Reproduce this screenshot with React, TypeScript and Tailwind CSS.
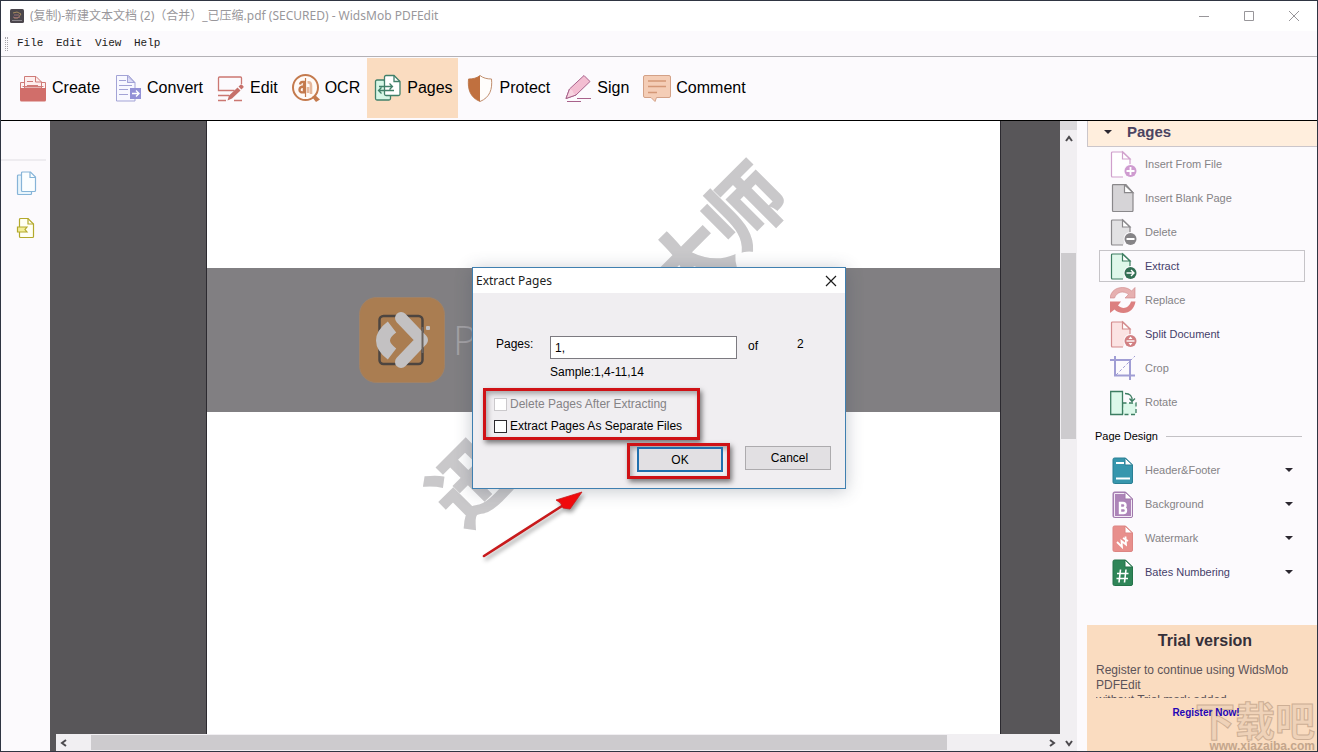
import { ReactNode, useState } from 'react';

const toolbarItems: { label: string; icon: ReactNode; active?: boolean }[] = [
  { label: 'Create', icon: <CreateIcon /> },
  { label: 'Convert', icon: <ConvertIcon /> },
  { label: 'Edit', icon: <EditIcon /> },
  { label: 'OCR', icon: <OcrIcon /> },
  { label: 'Pages', icon: <PagesIcon />, active: true },
  { label: 'Protect', icon: <ProtectIcon /> },
  { label: 'Sign', icon: <SignIcon /> },
  { label: 'Comment', icon: <CommentIcon /> },
];

const pageActions: { label: string; icon: ReactNode; enabled?: boolean; selected?: boolean }[] = [
  { label: 'Insert From File', icon: <PageIcon stroke="#d0a0cc" fill="#fff" badge="#cf9bd0" sign="plus" /> },
  { label: 'Insert Blank Page', icon: <BlankPageIcon /> },
  { label: 'Delete', icon: <PageIcon stroke="#8a888b" fill="#e2e1e3" badge="#868487" sign="minus" /> },
  {
    label: 'Extract',
    icon: <PageIcon stroke="#3c7d60" fill="#dff7ea" badge="#336f54" sign="arrow" />,
    enabled: true,
    selected: true,
  },
  { label: 'Replace', icon: <ReplaceIcon /> },
  {
    label: 'Split Document',
    icon: <PageIcon stroke="#d38a8c" fill="#fbe3e3" badge="#d17f82" sign="split" />,
    enabled: true,
  },
  { label: 'Crop', icon: <CropIcon /> },
  { label: 'Rotate', icon: <RotateIcon /> },
];

const designActions: { label: string; icon: ReactNode; enabled?: boolean }[] = [
  {
    label: 'Header&Footer',
    icon: (
      <DesignIcon fill="#3796ad" stroke="#2a7f94">
        <path d="M6 7h8M6 22.500h14" stroke="#fff" strokeWidth="2" />
      </DesignIcon>
    ),
  },
  {
    label: 'Background',
    icon: (
      <DesignIcon fill="#ad84b8" stroke="#a079ac">
        <path d="M4.500 3.500h11l6 6v17h-17z" fill="none" stroke="#f3eaf5" />
        <path
          d="M10 13v10h3.500a2.500 2.500 0 0 0 0-5H10h3a2.500 2.500 0 0 0 0-5z"
          fill="none"
          stroke="#fff"
          strokeWidth="2.400"
        />
      </DesignIcon>
    ),
  },
  {
    label: 'Watermark',
    icon: (
      <DesignIcon fill="#e88f8c" stroke="#dd8583">
        <path d="M7 18l5 5-.5-6 4.500 3.500-.5-8M13 14l5 3" fill="none" stroke="#fff" strokeWidth="1.800" />
      </DesignIcon>
    ),
  },
  {
    label: 'Bates Numbering',
    icon: (
      <DesignIcon fill="#2f8558" stroke="#25734a">
        <path d="M10.500 11.500l-1.500 13M16 11.500l-1.500 13M7 15.500h11.500M6.500 20.500h11.500" stroke="#fff" strokeWidth="1.600" />
      </DesignIcon>
    ),
    enabled: true,
  },
];

function CreateIcon() {
  return (
    <svg className="size-7 shrink-0" viewBox="0 0 28 28" fill="none" stroke="#cf7b78">
      <path d="M1.500 15V8.500h4M22 8.500h4.500V15" fill="#fdf1f0" />
      <path d="M5.500 14V2.500H17l5.500 5.500v6z" fill="#fdeeee" />
      <path d="M16.500 2.500v5.500h6M8 7.500h6M8 11.500h11" />
      <path d="M1 14h26v12a1.500 1.500 0 0 1-1.500 1.500h-23A1.500 1.500 0 0 1 1 26z" fill="#d16e6a" stroke="none" />
      <path d="M3.500 12.500h21" />
    </svg>
  );
}

function ConvertIcon() {
  return (
    <svg className="size-7 shrink-0" viewBox="0 0 28 28" fill="none" stroke="#a3a3d6">
      <path d="M2.500 1.500h12l6.500 7v18.500H2.500z" fill="#f8f8ff" />
      <path d="M13.500 1.500v7h7.500M5 6.500h7M5 11.500h13M5 15.500h9M5 20.500h9" />
      <path d="M13.500 2l7 6.500h-7z" fill="#dcdcf6" />
      <path d="M16 14h11v11H16z" fill="#9391d6" stroke="none" />
      <path d="M18 19.500h7M22 16.500l3 3-3 3" stroke="#fff" strokeWidth="1.400" />
    </svg>
  );
}

function EditIcon() {
  return (
    <svg className="size-7 shrink-0" viewBox="0 0 28 28" fill="none" stroke="#cb7772" strokeWidth="1.300">
      <path d="M24.500 10V4a1 1 0 0 0-1-1h-21a1 1 0 0 0-1 1v12.500h16" />
      <path d="M1 21.500h11M1 26.500h8M17 26.500h8" />
      <path d="M12 21.500l8.500-8 3 3-8.500 8-4.500 2z" fill="#c6706a" stroke="none" />
      <path d="M21.500 12.500l2-1.800a1 1 0 0 1 1.400 0l1.500 1.500a1 1 0 0 1 0 1.400l-2 2z" fill="#c6706a" stroke="none" />
    </svg>
  );
}

function OcrIcon() {
  return (
    <svg className="size-7 shrink-0" viewBox="0 0 28 28" fill="none" stroke="#c47a4e">
      <circle cx="13.500" cy="13.500" r="12.500" strokeWidth="2" fill="#fffaf7" />
      <path d="M20 23l3-2 5 4.500-4 2.500z" fill="#c47a4e" stroke="none" />
      <path d="M15.500 8.500c3-.5 3.500 1 3.500 3.500v8M16 13v6" stroke="#e5b79c" strokeWidth="2.600" />
      <path d="M8 10.500C8.500 8 10 7.500 12 8v11.500M12 12.500c-3 0-4.500 1-4.500 3.500s3 3 4.500 1.500" strokeWidth="2.400" />
      <path d="M13.500 4v19" strokeWidth="1.200" />
    </svg>
  );
}

function PagesIcon() {
  return (
    <svg className="size-7 shrink-0" viewBox="0 0 28 28" fill="none" stroke="#41806a" strokeWidth="1.300">
      <path d="M10 6H3a1.500 1.500 0 0 0-1.500 1.500v17A1.500 1.500 0 0 0 3 26h12a1.500 1.500 0 0 0 1.500-1.500V21z" fill="#d6f6e6" />
      <path d="M10.500 3A1.500 1.500 0 0 1 12 1.500h8l6 6V20a1.500 1.500 0 0 1-1.500 1.500H12A1.500 1.500 0 0 1 10.500 20z" fill="#fff" />
      <path d="M20 1.500v6h6M5 12.500h13M15.500 9.500l3 3-3 3M20 16.500H5M7.500 13.500l-3 3 3 3" />
    </svg>
  );
}

function ProtectIcon() {
  return (
    <svg className="size-7 shrink-0" viewBox="0 0 28 28">
      <path
        d="M13 1.500c3 2.500 7 3.500 11.500 3.500 1 10-1.500 18.500-11.500 22.500C3 23.500.5 15 1.500 5 6 5 10 4 13 1.500z"
        fill="#fffdfb"
        stroke="#c08d6d"
      />
      <path d="M13 1.500C10 4 6 5 1.500 5 .5 15 3 23.500 13 27.500z" fill="#c0703f" />
    </svg>
  );
}

function SignIcon() {
  return (
    <svg className="size-7 shrink-0" viewBox="0 0 28 28" fill="none" stroke="#a8628b" strokeLinejoin="round">
      <path d="M2 24.500L5.500 15 20 1.500l6 6L12 21z" fill="#f3bed2" />
      <path d="M2 24.500L5.500 15l3 1.500 1 2.500 2.500 2z" fill="#f7d3df" stroke="none" />
      <path d="M2 24.500L5.500 15M2 24.500L12 21M13 24.500h14M3 27.500h14" />
    </svg>
  );
}

function CommentIcon() {
  return (
    <svg className="size-7 shrink-0" viewBox="0 0 28 28" fill="none" stroke="#d3a187">
      <path d="M2 1.500h24a1.500 1.500 0 0 1 1.500 1.500v19a1.500 1.500 0 0 1-1.500 1.500H13.500L12 27.500l-4-4H2A1.500 1.500 0 0 1 .5 22V3A1.500 1.500 0 0 1 2 1.500z" fill="#f4cdb6" />
      <path d="M5 7h18M5 12.500h18M5 18.500h9" stroke="#d49877" strokeWidth="1.500" />
    </svg>
  );
}

function PageIcon({ stroke, fill, badge, sign }: { stroke: string; fill: string; badge: string; sign: string }) {
  return (
    <svg className="size-7 shrink-0" viewBox="0 0 28 28" fill="none">
      <path
        d="M13 27H2.500a1 1 0 0 1-1-1V3a1 1 0 0 1 1-1H13l7 7v7"
        fill={fill}
        stroke={stroke}
        strokeWidth="1.200"
      />
      <path d="M12.500 2v7H20z" fill="#fff" stroke={stroke} strokeWidth="1.200" />
      <circle cx="20.500" cy="21" r="7" fill="#fcfafd" />
      <circle cx="20.500" cy="21" r="6" fill={badge} />
      {sign === 'plus' && <path d="M16.500 21h8M20.500 17v8" stroke="#fff" strokeWidth="1.800" />}
      {sign === 'minus' && <path d="M16.500 21h8" stroke="#fff" strokeWidth="2" />}
      {sign === 'arrow' && <path d="M16.500 21h7.500M21 18l3 3-3 3" stroke="#fff" strokeWidth="1.400" />}
      {sign === 'split' && (
        <>
          <path d="M16.500 21h8" stroke="#fff" strokeWidth="1.400" />
          <path d="M18.500 19l2-2.500 2 2.500zM18.500 23l2 2.500 2-2.500z" fill="#fff" />
        </>
      )}
    </svg>
  );
}

function BlankPageIcon() {
  return (
    <svg className="size-7 shrink-0" viewBox="0 0 28 28" stroke="#8a888b" strokeWidth="1.200">
      <path d="M3.500.7h12.500l7 8V26.500a1 1 0 0 1-1 1H3.500a1 1 0 0 1-1-1v-25a1 1 0 0 1 1-1z" fill="#d6d4d7" />
      <path d="M14.500.7v8H23z" fill="#fff" />
    </svg>
  );
}

function ReplaceIcon() {
  return (
    <svg className="size-7 shrink-0" viewBox="0 0 28 28">
      <path
        d="M0 12C1 5 6 1.500 12.500 1.500c4 0 7 1.500 9 3.500L25 1.500V12H15l3.500-3.500c-5-4.500-12-2.500-14 3.500z"
        fill="#e6b0b0"
        stroke="#cf8486"
        strokeWidth=".6"
      />
      <path d="M25.500 15.500C24.500 22.500 19.500 27 13.500 27c-4 0-7-1.500-9-3.500L0 27V15.500h11L8 19.500c5 4.500 11 2.500 13-4z" fill="#dc8080" />
    </svg>
  );
}

function CropIcon() {
  return (
    <svg className="size-7 shrink-0" viewBox="0 0 28 28" fill="none" stroke="#a09dd4" strokeWidth="2">
      <path d="M5 2v19.500H25M0 6h20v20" />
      <path d="M6 21L25 2" strokeWidth="1" strokeDasharray="3 2" />
    </svg>
  );
}

function RotateIcon() {
  return (
    <svg className="size-7 shrink-0" viewBox="0 0 28 28" fill="none" stroke="#3c7d62" strokeWidth="1.300">
      <path d="M12.500 15H26v11.500H12.500z" fill="#dcf8ea" strokeDasharray="4 2.500" />
      <path d="M.700 3.500h11.800v23H.700z" fill="#dcf8ea" />
      <path d="M15 5.500c5 0 7.500 2.500 7 7.500M19.500 10.500l2.500 3 3-3" />
    </svg>
  );
}

function DesignIcon({ fill, stroke, children }: { fill: string; stroke: string; children: ReactNode }) {
  return (
    <svg className="size-7 shrink-0" viewBox="0 0 28 28" fill="none">
      <path d="M4.500 2h11l7 7v17a1.500 1.500 0 0 1-1.500 1.500H4.500A1.500 1.500 0 0 1 3 26V3.500A1.500 1.500 0 0 1 4.500 2z" fill={fill} stroke={stroke} />
      {children}
      <path d="M15 2v7h7.500z" fill="#fff" stroke={stroke} />
    </svg>
  );
}

function Caret() {
  return (
    <svg className="h-1 w-2 shrink-0" viewBox="0 0 8 4">
      <path d="M0 0h8L4 4z" fill="#2b2730" />
    </svg>
  );
}

function Chevron({ d }: { d: string }) {
  return (
    <svg className="size-2" viewBox="0 0 8 8" fill="none" stroke="#4c4a4e" strokeWidth="2">
      <path d={d} />
    </svg>
  );
}

function TitleBar() {
  return (
    <header className="flex h-[30px] shrink-0 items-center bg-white pl-[9px] text-[#99979b]">
      <svg className="size-[14px]" viewBox="0 0 14 14" fill="none">
        <rect width="14" height="14" rx="1.500" fill="#4b474d" />
        <path d="M3 4l4-1 4 2-3 4H4" stroke="#a98d5e" />
        <path d="M4 6h5M3 8l3 1 4-1" stroke="#9b6f76" />
        <path d="M2 11.500h10" stroke="#8a868c" />
      </svg>
      <h1 className="ml-[6px] whitespace-nowrap font-['Noto_Sans','Noto_Sans_CJK_SC',sans-serif] text-xs">
        (复制)-新建文本文档 (2)（合并）_已压缩.pdf (SECURED) - WidsMob PDFEdit
      </h1>
      <div className="ml-auto flex">
        <button className="grid h-[30px] w-[45px] place-items-center" aria-label="Minimize">
          <svg className="size-3" viewBox="0 0 12 12" stroke="#98969a">
            <path d="M1 6.500h10" />
          </svg>
        </button>
        <button className="grid h-[30px] w-[45px] place-items-center" aria-label="Maximize">
          <svg className="size-3" viewBox="0 0 12 12" stroke="#98969a" fill="none">
            <path d="M1.500 1.500h9v9h-9z" />
          </svg>
        </button>
        <button className="grid h-[30px] w-[46px] place-items-center" aria-label="Close">
          <svg className="size-3" viewBox="0 0 12 12" stroke="#98969a">
            <path d="M1 1l10 10M11 1L1 11" />
          </svg>
        </button>
      </div>
    </header>
  );
}

function MenuBar() {
  return (
    <nav className="flex h-[26px] shrink-0 items-center border-b border-[#b3b1b6] pl-1 text-[#1d1b20]">
      <span className="h-[14px] w-[3px] border-x border-dotted border-[#a8a6ab]"></span>
      <div className="ml-[9px] flex font-['Liberation_Mono',monospace] text-[11px]">
        {['File', 'Edit', 'View', 'Help'].map((item) => (
          <button key={item} className="w-[39px] text-left">
            {item}
          </button>
        ))}
      </div>
    </nav>
  );
}

function Toolbar() {
  return (
    <div className="flex h-16 shrink-0 items-start gap-[2px] border-b border-black pt-px pl-[11px]">
      {toolbarItems.map((item) => (
        <button
          key={item.label}
          className={`flex h-[60px] items-center gap-[5px] pr-[5px] pl-[7px] text-base text-black ${
            item.active ? 'bg-[#fadcc0]' : ''
          }`}
        >
          {item.icon}
          {item.label}
        </button>
      ))}
    </div>
  );
}

function SideRail() {
  return (
    <aside className="flex w-[49px] shrink-0 flex-col items-start">
      <div className="h-10 w-[45px] border-b-2 border-[#eeecf0]"></div>
      <button className="mt-[10px] ml-[15px]" aria-label="Thumbnails">
        <svg className="size-6" viewBox="0 0 24 24" fill="none" stroke="#86b4d8" strokeWidth="1.200">
          <path d="M5 4H2.500a1 1 0 0 0-1 1v17.500a1 1 0 0 0 1 1h12a1 1 0 0 0 1-1V20z" fill="#e9f5fc" />
          <path d="M5.500 2a1 1 0 0 1 1-1h8l5 5v13.500a1 1 0 0 1-1 1h-12a1 1 0 0 1-1-1z" fill="#fbfeff" />
          <path d="M14 1v5.500h5.500" />
        </svg>
      </button>
      <button className="mt-[22px] ml-[15px]" aria-label="Bookmarks">
        <svg className="size-6" viewBox="0 0 24 24" fill="none" stroke="#b3a92c" strokeWidth="1.200">
          <path d="M3.500 2.500a1 1 0 0 1 1-1h7.500l5.500 5.500v12.500a1 1 0 0 1-1 1h-12a1 1 0 0 1-1-1z" fill="#fffff4" />
          <path d="M12 1.500V7h5.500" />
          <path d="M1.500 10h9.500l-2 2.500 2 2.500H1.500z" fill="#f3ee9b" />
        </svg>
      </button>
    </aside>
  );
}

function AppLogo() {
  return (
    <svg className="size-[86px] shrink-0" viewBox="0 0 86 86" fill="none">
      <rect x=".5" y=".5" width="85" height="85" rx="17" fill="#aa7d51" stroke="#a08267" />
      <rect x="20.500" y="19" width="43" height="48" rx="4" stroke="#4d4540" strokeWidth="2.500" />
      <path d="M33 30C21 39 21 48 33 57" stroke="#c3c1c2" strokeWidth="14" />
      <path d="M42 21L63 43 42 65" stroke="#c3c1c2" strokeWidth="12" strokeLinecap="round" strokeLinejoin="round" />
      <path d="M63.500 30v26" stroke="#6b6460" strokeWidth="2" />
      <rect x="67" y="29" width="4" height="4" rx="1" fill="#c3c1c2" />
    </svg>
  );
}

function DocumentArea() {
  return (
    <main className="flex min-w-0 flex-1 flex-col bg-[#585659]">
      <div className="flex min-h-0 flex-1 pr-[59px] pl-[156px]">
        <article className="relative min-w-0 flex-1 overflow-hidden border-x border-[#2c2a30] bg-white pt-[147px]">
          <div className="flex h-36 items-center overflow-hidden bg-[#817f82] pl-[152px]">
            <AppLogo />
            <span className="ml-2 font-['Open_Sans',sans-serif] text-[40px] font-light text-[#a3a1a4]">P</span>
          </div>
          <div className="absolute top-[220px] left-1/2 flex w-[466px] -translate-x-1/2 -translate-y-1/2 -rotate-45 justify-between font-['Noto_Sans_CJK_SC',sans-serif] text-[78px] leading-none font-bold text-[#c9c8ca] [-webkit-text-stroke:2px_#c9c8ca]">
            <span>迅</span>
            <span>大师</span>
          </div>
        </article>
      </div>
      <div className="ml-[6px] flex h-[17px] shrink-0 items-center bg-[#f1eff2]">
        <button className="grid w-[35px] place-items-center pr-5" aria-label="Scroll left">
          <Chevron d="M6 1L2 4l4 3" />
        </button>
        <div className="h-[15px] flex-1 bg-[#cdcbce]"></div>
        <button className="grid w-[113px] place-items-end pr-1" aria-label="Scroll right">
          <Chevron d="M2 1l4 3-4 3" />
        </button>
      </div>
    </main>
  );
}

function VerticalScrollbar() {
  return (
    <div className="flex w-[17px] shrink-0 flex-col items-center bg-[#f1eff2]">
      <div className="h-[9px] w-full bg-[#dbd9dc]"></div>
      <button className="mt-[5px]" aria-label="Scroll up">
        <Chevron d="M1 6l3-4 3 4" />
      </button>
      <div className="flex min-h-0 w-full flex-1 flex-col pt-[110px]">
        <div className="mx-px h-[186px] bg-[#cdcbce]"></div>
      </div>
      <button className="mb-1" aria-label="Scroll down">
        <Chevron d="M1 2l3 4 3-4" />
      </button>
    </div>
  );
}

function TrialBox() {
  return (
    <section className="relative h-[126px] overflow-hidden bg-[#fadcc0]">
      <h2 className="pt-1 pl-[6px] text-center text-base font-bold text-[#353039]">Trial version</h2>
      <p className="mt-[10px] ml-[9px] h-[35px] overflow-hidden text-xs leading-[15px] text-[#5c5358]">
        Register to continue using WidsMob
        <br />
        PDFEdit
        <br />
        without Trial mark added.
      </p>
      <div
        className="absolute right-0 bottom-0 pr-[2px] text-right font-['Noto_Sans_CJK_SC',sans-serif] font-bold text-[#efd2b8]"
        aria-hidden="true"
      >
        <div className="text-[40px] leading-[44px] whitespace-nowrap [-webkit-text-stroke:1px_#cdaf95]">下载吧</div>
        <div className="font-['Liberation_Sans',sans-serif] text-xs leading-[10px] text-[#c4a68c]">www.xiazaiba.com</div>
      </div>
      <a
        href="#register"
        className="relative block pt-[7px] pl-[8px] text-center text-[10px] leading-[15px] font-bold text-[#2406b5]"
      >
        Register Now!
      </a>
    </section>
  );
}

function PagesPanel() {
  return (
    <aside className="ml-[10px] flex w-[230px] shrink-0 flex-col justify-between">
      <div>
        <h2 className="flex h-[26px] items-center gap-[15px] border-b border-l border-[#cbc6cb] bg-[#ffeedd] pb-[3px] pl-4 text-[15px] font-bold text-[#4b4462]">
          <Caret />
          Pages
        </h2>
        <div className="flex flex-col gap-[2px] px-3 py-px">
          {pageActions.map((action) => (
            <button
              key={action.label}
              className={`flex h-8 items-center gap-[7px] border pl-[10px] text-[11px] ${
                action.selected ? 'border-[#c6c4c8]' : 'border-transparent'
              } ${action.enabled ? 'text-[#45406a]' : 'text-[#858386]'}`}
            >
              {action.icon}
              {action.label}
            </button>
          ))}
        </div>
        <h3 className="flex h-[34px] items-center gap-2 pr-[15px] pl-2 text-[11px] text-black">
          Page Design
          <span className="h-px flex-1 bg-[#c3c1c5]"></span>
        </h3>
        <div className="pr-6 pl-3">
          {designActions.map((action) => (
            <button
              key={action.label}
              className={`flex h-[34px] w-full items-center gap-[7px] pl-[11px] text-[11px] ${
                action.enabled ? 'text-[#45406a]' : 'text-[#858386]'
              }`}
            >
              {action.icon}
              <span className="flex-1 text-left">{action.label}</span>
              <Caret />
            </button>
          ))}
        </div>
      </div>
      <TrialBox />
    </aside>
  );
}

function ExtractDialog() {
  const [range, setRange] = useState('1,');
  return (
    <div
      role="dialog"
      aria-label="Extract Pages"
      className="absolute top-[266px] left-1/2 h-[222px] w-[374px] -translate-x-1/2 border border-[#3f7fb0] bg-[#f0eef1] text-xs text-black shadow-[0_2px_16px_rgba(60,70,90,0.3)]"
    >
      <div className="flex h-[25px] items-center justify-between bg-white pr-2 pl-[3px]">
        <h2 className="font-['Noto_Sans',sans-serif] text-xs text-[#222]">Extract Pages</h2>
        <button aria-label="Close dialog">
          <svg className="size-3" viewBox="0 0 12 12" stroke="#1c1c1c" strokeWidth="1.200">
            <path d="M1 1l10 10M11 1L1 11" />
          </svg>
        </button>
      </div>
      <div className="mt-[43px] flex h-[23px] pl-[23px] leading-4">
        <label htmlFor="range" className="w-[54px]">
          Pages:
        </label>
        <input
          id="range"
          className="w-[187px] border border-[#7c7a80] bg-white px-1 outline-none"
          value={range}
          onChange={(e) => setRange(e.target.value)}
        />
        <span className="w-[60px] pt-[2px] pl-[11px]">of</span>
        <span>2</span>
      </div>
      <p className="mt-[5px] pl-[77px] leading-4">Sample:1,4-11,14</p>
      <div className="mt-2 ml-[10px] flex h-[52px] w-[217px] flex-col justify-between border-[3px] border-[#cf1216] pt-[5px] pb-[3px] pl-2 shadow-[2px_3px_5px_rgba(0,0,0,0.5),inset_2px_3px_5px_rgba(0,0,0,0.3)]">
        <label className="flex items-center gap-[3px] leading-4 text-[#858386]">
          <input type="checkbox" disabled className="size-[13px] appearance-none border border-[#cbc9cc] bg-white" />
          Delete Pages After Extracting
        </label>
        <label className="flex items-center gap-[3px] leading-4">
          <input type="checkbox" className="size-[13px] appearance-none border border-[#2c2a2e] bg-white" />
          Extract Pages As Separate Files
        </label>
      </div>
      <div className="mt-[3px] flex items-start justify-end gap-[15px] pr-[14px]">
        <div className="border-[3px] border-[#cf1216] pt-px pr-1 pb-1 pl-[7px] shadow-[2px_3px_5px_rgba(0,0,0,0.5),inset_2px_3px_5px_rgba(0,0,0,0.3)]">
          <button className="h-[25px] w-[86px] border-2 border-[#2070ae] bg-[#e2e0e3]">OK</button>
        </div>
        <button className="mt-[3px] h-6 w-[86px] border border-[#adabae] bg-[#e2e0e3] pl-[3px]">Cancel</button>
      </div>
      {/* pointer to the OK button */}
      <svg
        className="absolute top-[221px] left-[5px] h-[76px] w-[112px] drop-shadow-[2px_3px_2px_rgba(0,0,0,0.4)]"
        viewBox="0 0 112 76"
      >
        <path d="M6 67L84 17" stroke="#c81a1c" strokeWidth="2.600" strokeLinecap="round" />
        <path d="M104 3L78 11l4.500 3 2.500 5 7 1z" fill="#f00a0c" stroke="#c81a1c" strokeWidth=".8" />
      </svg>
    </div>
  );
}

function App() {
  return (
    <div className="relative flex h-screen min-h-[700px] flex-col overflow-hidden border border-[#2f3542] bg-[#fcfafd] font-['Liberation_Sans',Arial,sans-serif]">
      <TitleBar />
      <MenuBar />
      <Toolbar />
      <div className="flex min-h-0 flex-1">
        <SideRail />
        <DocumentArea />
        <VerticalScrollbar />
        <PagesPanel />
      </div>
      <ExtractDialog />
    </div>
  );
}

export default App;
